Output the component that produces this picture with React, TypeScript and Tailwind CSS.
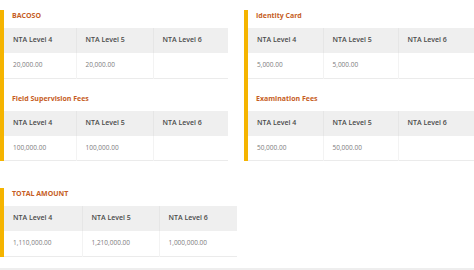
import React from 'react';

type Col = { label: string; value: string; width?: string };

interface FeeCardProps {
  title: string;
  cols: Col[];
  className?: string;
}

const FeeCard: React.FC<FeeCardProps> = ({ title, cols, className }) => {
  return (
    <div className={`border-l-4 border-[#f5b400] ${className ?? ''}`}>
      <div className="h-[11px] mb-[7px] pl-2 text-[7px] leading-[11px] font-bold text-[#c65d24]">{title}</div>
      <table className="w-full table-fixed border-collapse">
        <colgroup>
          {cols.map((c, i) => (
            <col key={i} style={c.width ? { width: c.width } : undefined} />
          ))}
        </colgroup>
        <thead>
          <tr className="bg-[#efefef]">
            {cols.map((c, i) => (
              <th
                key={i}
                className="h-[25px] pl-[9px] text-left align-middle text-[7px] font-semibold text-[#4a4a4a] border-r border-[#e6e6e6] last:border-r-0"
              >
                {c.label}
              </th>
            ))}
          </tr>
        </thead>
        <tbody>
          <tr className="border-b border-[#ebebeb]">
            {cols.map((c, i) => (
              <td
                key={i}
                className="h-[25px] pl-[9px] align-middle text-[6.5px] text-[#7c7c7c] border-r border-[#f3f3f3] last:border-r-0"
              >
                {c.value}
              </td>
            ))}
          </tr>
        </tbody>
      </table>
    </div>
  );
};

const levels = ['NTA Level 4', 'NTA Level 5', 'NTA Level 6'];

const make = (values: string[], widths: string[]): Col[] =>
  levels.map((label, i) => ({ label, value: values[i], width: widths[i] }));

const leftW = ['72px', '77px', ''];
const rightW = ['75px', '75px', ''];
const totalW = ['78px', '77px', ''];

export default function App() {
  return (
    <div className="w-[474px] h-[270px] overflow-hidden bg-white pt-[10px] font-['Open_Sans',sans-serif]">
      <div className="flex">
        <div className="w-[228px]">
          <FeeCard title="BACOSO" cols={make(['20,000.00', '20,000.00', ''], leftW)} className="pb-[3px]" />
          <FeeCard title="Field Supervision Fees" cols={make(['100,000.00', '100,000.00', ''], leftW)} className="pt-[11px]" />
        </div>
        <div className="w-[230px] ml-4">
          <FeeCard title="Identity Card" cols={make(['5,000.00', '5,000.00', ''], rightW)} className="pb-[3px]" />
          <FeeCard title="Examination Fees" cols={make(['50,000.00', '50,000.00', ''], rightW)} className="pt-[11px]" />
        </div>
      </div>
      <div className="w-[237px] mt-[27px]">
        <FeeCard title="TOTAL AMOUNT" cols={make(['1,110,000.00', '1,210,000.00', '1,000,000.00'], totalW)} />
      </div>
      <div className="mt-[11px] h-[3px] bg-[#eeeeee]" />
    </div>
  );
}
